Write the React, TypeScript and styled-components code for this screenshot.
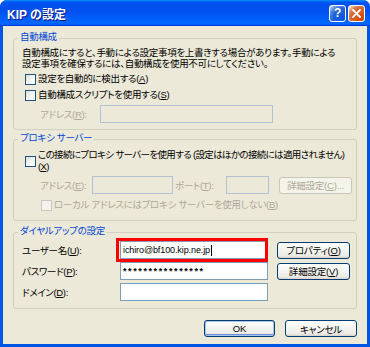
import React from 'react'
import styled, { createGlobalStyle, css } from 'styled-components'

const GlobalStyle = createGlobalStyle`
    html, body {
        margin: 0;
        padding: 0;
        background: #ffffff;
    }
    body {
        font-family: "Liberation Sans", "Noto Sans CJK JP", sans-serif;
        font-size: 9.5px;
        letter-spacing: -0.3px;
        font-feature-settings: "palt";
    }
`

const Window = styled.div`
    width: 370px;
    height: 347px;
    box-sizing: border-box;
    display: flex;
    flex-direction: column;
    background: #0055e5;
    border-radius: 7px 7px 0 0;
    overflow: hidden;
`

const TitleBar = styled.div`
    flex: none;
    height: 26px;
    display: flex;
    align-items: center;
    justify-content: space-between;
    padding: 0 5px 0 7px;
    background: linear-gradient(180deg, #0997ff, #0053ee 8%, #0050ee 40%, #0066ff 88%, #0066ff 93%, #005bff 95%, #003dd7 96%, #003dd7);
`

const Title = styled.span`
    color: #ffffff;
    font-weight: bold;
    font-size: 12px;
    letter-spacing: 0;
    text-shadow: 1px 1px #0f1089;
    white-space: nowrap;
`

const Controls = styled.div`
    display: flex;
    gap: 2px;
`

const CaptionButton = styled.div<{ $kind: 'help' | 'close' }>`
    width: 17px;
    height: 17px;
    box-sizing: border-box;
    border: 1px solid #ffffff;
    border-radius: 3px;
    display: flex;
    align-items: center;
    justify-content: center;
    color: #ffffff;
    font: bold 12px "Liberation Sans", sans-serif;
    background: ${p =>
        p.$kind === 'close'
            ? 'radial-gradient(circle at 90% 90%, #cc4600 0, #dc6527 55%, #cd7546 70%, #ffccb2 90%, #fff 100%)'
            : 'radial-gradient(circle at 90% 90%, #0054e9 0, #2263d5 55%, #4479e4 70%, #a3bbec 90%, #fff 100%)'};
`

const Body = styled.div`
    flex: 1;
    margin: 0 3px 3px;
    background: #ece9d8;
    padding: 5px 10px 0;
    display: flex;
    flex-direction: column;
`

const Group = styled.fieldset<{ $gap?: number }>`
    margin: ${p => p.$gap ?? 0}px 0 0;
    padding: 0 6px ${p => (p.$gap === undefined ? 6 : 7)}px 8px;
    border: 1px solid #d0d0bf;
    border-radius: 3px;
    min-width: 0;
`

const Legend = styled.legend`
    color: #0046d5;
    padding: 0 2px 2px;
    margin-left: -4px;
    line-height: 12px;
`

const Description = styled.div`
    margin-top: 2px;
    line-height: 11px;
    white-space: nowrap;
`

const CheckRow = styled.div<{ $indent?: number; $disabled?: boolean; $top?: number; $tight?: boolean }>`
    display: flex;
    align-items: center;
    gap: 2px;
    min-height: 16px;
    margin-top: ${p => p.$top ?? 0}px;
    padding-left: ${p => p.$indent ?? 3}px;
    line-height: 12px;
    white-space: nowrap;
    letter-spacing: ${p => (p.$tight ? '-0.65px' : '-0.3px')};
    color: ${p => (p.$disabled ? '#aca899' : '#000000')};
`

const Check = styled.span<{ $disabled?: boolean }>`
    flex: none;
    width: 11px;
    height: 11px;
    box-sizing: border-box;
    border: 1px solid ${p => (p.$disabled ? '#cac8bb' : '#1c5180')};
    background: ${p => (p.$disabled ? '#f3f2ec' : 'linear-gradient(135deg, #dcdcd7, #ffffff 75%)')};
`

const FieldRow = styled.div<{ $top?: number }>`
    display: flex;
    align-items: center;
    height: 18px;
    margin-top: ${p => p.$top ?? 0}px;
    padding-left: 18px;
`

const FieldLabel = styled.span<{ $w?: number; $disabled?: boolean; $ml?: number }>`
    flex: none;
    width: ${p => (p.$w ? `${p.$w}px` : 'auto')};
    margin-left: ${p => p.$ml ?? 0}px;
    white-space: nowrap;
    color: ${p => (p.$disabled ? '#aca899' : '#000000')};
`

const TextBox = styled.div<{ $w?: number; $disabled?: boolean; $highlight?: boolean; $secret?: boolean }>`
    position: relative;
    flex: none;
    box-sizing: border-box;
    width: ${p => (p.$w ? `${p.$w}px` : 'auto')};
    height: 18px;
    display: flex;
    align-items: center;
    padding: 0 2px;
    border: 1px solid ${p => (p.$disabled ? '#b3c2d3' : '#7f9db9')};
    background: ${p => (p.$disabled ? '#ece9d8' : '#ffffff')};
    font: ${p => (p.$secret ? 'bold 9px' : '9px')} "Liberation Sans", sans-serif;
    letter-spacing: ${p => (p.$secret ? '1.6px' : '-0.1px')};
    white-space: nowrap;
    ${p =>
        p.$highlight &&
        css`
            &::after {
                content: '';
                position: absolute;
                top: -4px;
                bottom: -4px;
                left: -5px;
                right: -1px;
                border: 3px solid #ff0000;
            }
        `}
`

const Caret = styled.span`
    display: inline-block;
    width: 1px;
    height: 11px;
    background: #000000;
    margin-left: 1px;
`

const Button = styled.button<{ $w: number; $primary?: boolean; $ml?: number }>`
    flex: none;
    box-sizing: border-box;
    width: ${p => p.$w}px;
    height: 17px;
    margin-left: ${p => p.$ml ?? 0}px;
    padding: 0;
    font: 9.5px "Liberation Sans", "Noto Sans CJK JP", sans-serif;
    letter-spacing: -0.2px;
    font-feature-settings: "palt";
    color: #000000;
    border: 1px solid #003c74;
    border-radius: 3px;
    background: linear-gradient(#ffffff, #f4f4f0 45%, #ecebe6 85%, #d6d0c5);
    box-shadow: ${p => (p.$primary ? 'inset 0 0 0 1px #a9c4ef, inset 0 -1px 0 1px #6d8fd6' : 'none')};
    white-space: nowrap;

    &:disabled {
        color: #aca899;
        border-color: #c9c7ba;
        background: #f5f4ea;
    }
`

const DialGrid = styled.div`
    display: grid;
    grid-template-columns: 89px 148px 73px;
    column-gap: 9px;
    row-gap: 3px;
    align-items: center;
    margin-top: 2px;
`

const Footer = styled.div`
    display: flex;
    justify-content: flex-end;
    gap: 10px;
    margin-top: 11px;
`

const CloseIcon = () => (
    <svg width="9" height="9" viewBox="0 0 9 9">
        <path d="M1 1 L8 8 M8 1 L1 8" stroke="#ffffff" strokeWidth="1.8" strokeLinecap="square" />
    </svg>
)

export default function App() {
    return (
        <>
            <GlobalStyle />
            <Window>
                <TitleBar>
                    <Title>KIP の設定</Title>
                    <Controls>
                        <CaptionButton $kind="help">?</CaptionButton>
                        <CaptionButton $kind="close">
                            <CloseIcon />
                        </CaptionButton>
                    </Controls>
                </TitleBar>
                <Body>
                    <Group>
                        <Legend>自動構成</Legend>
                        <Description>
                            自動構成にすると、手動による設定事項を上書きする場合があります。手動による
                            <br />
                            設定事項を確保するには、自動構成を使用不可にしてください。
                        </Description>
                        <CheckRow $top={2}>
                            <Check />
                            <span>設定を自動的に検出する(<u>A</u>)</span>
                        </CheckRow>
                        <CheckRow>
                            <Check />
                            <span>自動構成スクリプトを使用する(<u>S</u>)</span>
                        </CheckRow>
                        <FieldRow $top={2}>
                            <FieldLabel $w={60} $disabled>
                                アドレス(<u>R</u>):
                            </FieldLabel>
                            <TextBox $w={173} $disabled />
                        </FieldRow>
                    </Group>

                    <Group $gap={2}>
                        <Legend>プロキシ サーバー</Legend>
                        <CheckRow $top={3} $tight>
                            <Check />
                            <span>
                                この接続にプロキシ サーバーを使用する (設定はほかの接続には適用されません)
                                <br />(<u>X</u>)
                            </span>
                        </CheckRow>
                        <FieldRow $top={3}>
                            <FieldLabel $w={52} $disabled>
                                アドレス(<u>E</u>):
                            </FieldLabel>
                            <TextBox $w={81} $disabled />
                            <FieldLabel $w={51} $ml={2} $disabled>
                                ポート(<u>T</u>):
                            </FieldLabel>
                            <TextBox $w={43} $disabled />
                            <Button $w={73} $ml={10} disabled>
                                詳細設定(<u>C</u>)...
                            </Button>
                        </FieldRow>
                        <CheckRow $indent={19} $top={3} $disabled>
                            <Check $disabled />
                            <span>ローカル アドレスにはプロキシ サーバーを使用しない(<u>B</u>)</span>
                        </CheckRow>
                    </Group>

                    <Group $gap={4}>
                        <Legend>ダイヤルアップの設定</Legend>
                        <DialGrid>
                            <FieldLabel>
                                ユーザー名(<u>U</u>):
                            </FieldLabel>
                            <TextBox $highlight>
                                ichiro@bf100.kip.ne.jp
                                <Caret />
                            </TextBox>
                            <Button $w={73}>
                                プロパティ(<u>O</u>)
                            </Button>
                            <FieldLabel>
                                パスワード(<u>P</u>):
                            </FieldLabel>
                            <TextBox $secret>****************</TextBox>
                            <Button $w={73}>
                                詳細設定(<u>V</u>)
                            </Button>
                            <FieldLabel>
                                ドメイン(<u>D</u>):
                            </FieldLabel>
                            <TextBox />
                        </DialGrid>
                    </Group>

                    <Footer>
                        <Button $w={71} $primary>
                            OK
                        </Button>
                        <Button $w={72}>キャンセル</Button>
                    </Footer>
                </Body>
            </Window>
        </>
    )
}
